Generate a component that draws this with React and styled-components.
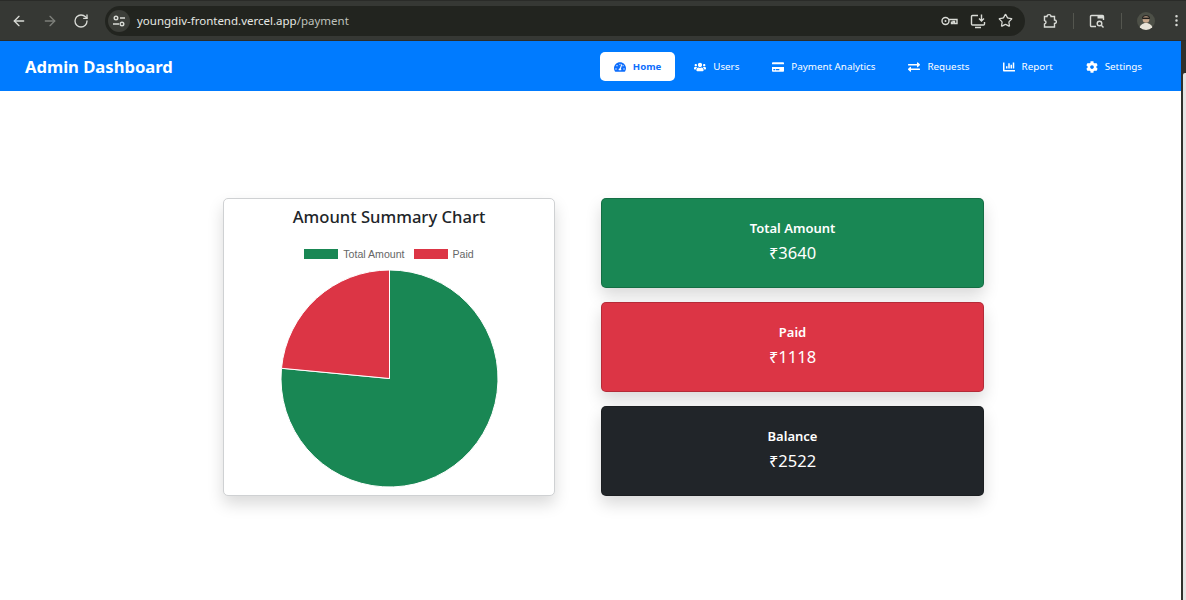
import React from 'react';
import styled, { createGlobalStyle } from 'styled-components';
import { FaTachometerAlt, FaUsers, FaCreditCard, FaExchangeAlt, FaChartBar, FaCog } from 'react-icons/fa';
import { ArrowLeft, ArrowRight, RotateCw, Star, EllipsisVertical } from 'lucide-react';

const GlobalStyle = createGlobalStyle`
html, body {
  margin: 0;
  padding: 0;
  background: #fff;
}
*, *:before, *:after {
  box-sizing: border-box;
}
body {
  font-family: "Noto Sans", "Open Sans", sans-serif;
  overflow: hidden;
}
`;

const Page = styled.div`
  width: 1186px;
  height: 600px;
  display: flex;
  flex-direction: column;
  overflow: hidden;
`;

const BrowserBar = styled.div`
  height: 41px;
  flex: none;
  display: flex;
  align-items: center;
  padding: 0 4px 0 11px;
  background: #363834;
  border-top: 1px solid #2a2b28;
  border-bottom: 1px solid #2c2d2a;
  color: #d9dbd6;
`;

const NavIcons = styled.div`
  display: flex;
  align-items: center;
  gap: 15px;
  margin-right: 16px;
`;

const AddressBar = styled.div`
  width: 920px;
  height: 30px;
  flex: none;
  display: flex;
  align-items: center;
  padding: 0 12px 0 3px;
  background: #22241f;
  border-radius: 15px;
`;

const SiteChip = styled.span`
  width: 22px;
  height: 22px;
  display: flex;
  align-items: center;
  justify-content: center;
  border-radius: 50%;
  background: #3c3e39;
  margin-right: 7px;
`;

const Url = styled.span`
  flex: 1;
  font-size: 11.5px;
  color: #e6e8e3;
  white-space: nowrap;
`;

const UrlPath = styled.span`
  color: #bfc1bc;
`;

const AddressActions = styled.div`
  display: flex;
  align-items: center;
  gap: 12px;
`;

const ToolIcons = styled.div`
  display: flex;
  align-items: center;
  margin-left: 16px;
`;

const Divider = styled.span`
  width: 1px;
  height: 16px;
  background: #54564f;
  margin: 0 15.5px;
`;

const Avatar = styled.span`
  width: 18px;
  height: 18px;
  display: block;
  border-radius: 50%;
  overflow: hidden;
  margin-right: 14px;
`;

const Body = styled.div`
  flex: 1;
  display: flex;
  min-height: 0;
`;

const Main = styled.div`
  flex: 1;
  display: flex;
  flex-direction: column;
`;

const EdgeStrip = styled.div`
  width: 5px;
  flex: none;
  padding: 32px 0 0 2px;
  background: #2f312d;
`;

const EdgeThumb = styled.div`
  height: 100%;
  background: #e4e4e4;
  border-top-left-radius: 2px;
`;

const TopNav = styled.nav`
  height: 50px;
  flex: none;
  display: flex;
  align-items: center;
  justify-content: space-between;
  padding: 0 25px;
  background: #007bff;
  color: #fff;
`;

const Brand = styled.div`
  font-size: 16.6px;
  font-weight: 700;
`;

const Menu = styled.div`
  display: flex;
  align-items: center;
  gap: 5px;
`;

const MenuItem = styled.a`
  height: 29px;
  display: flex;
  align-items: center;
  gap: 7px;
  padding: 1px 14px 0;
  border-radius: 5px;
  font-size: ${p => (p.$active ? 9.6 : 9.8)}px;
  font-weight: ${p => (p.$active ? 700 : 400)};
  color: ${p => (p.$active ? '#0d6efd' : '#fff')};
  background: ${p => (p.$active ? '#fff' : 'transparent')};
  white-space: nowrap;
`;

const Content = styled.main`
  flex: 1;
  display: grid;
  grid-template-columns: 332px 383px;
  column-gap: 46px;
  align-content: start;
  padding: 107px 0 0 223px;
`;

const ChartCard = styled.section`
  height: 298px;
  display: flex;
  flex-direction: column;
  align-items: center;
  padding-top: 7px;
  background: #fff;
  border: 1px solid #cfd1d3;
  border-radius: 5px;
  box-shadow: 0 8px 16px rgba(0, 0, 0, 0.15);
`;

const ChartTitle = styled.h2`
  margin: 0;
  font-size: 16.6px;
  line-height: 22px;
  font-weight: 500;
  color: #212529;
`;

const Legend = styled.div`
  display: flex;
  align-items: center;
  gap: 9px;
  margin-top: 19px;
  font-family: "Liberation Sans", Arial, sans-serif;
  font-size: 10.6px;
  line-height: 14px;
  color: #666;
`;

const LegendItem = styled.span`
  display: flex;
  align-items: center;
  gap: 5px;
`;

const Swatch = styled.span`
  width: 34px;
  height: 10px;
  background: ${p => p.$color};
`;

const PieBox = styled.svg`
  display: block;
  margin-top: 8px;
`;

const Stats = styled.div`
  display: flex;
  flex-direction: column;
  gap: 14px;
`;

const StatCard = styled.div`
  height: 90px;
  display: flex;
  flex-direction: column;
  align-items: center;
  justify-content: center;
  padding-bottom: 3px;
  background: ${p => p.$color};
  border: 1px solid rgba(0, 0, 0, 0.18);
  border-radius: 5px;
  color: #fff;
  box-shadow: 0 8px 16px rgba(0, 0, 0, 0.15);
`;

const StatLabel = styled.div`
  font-size: 13px;
  line-height: 18px;
  font-weight: 600;
`;

const StatValue = styled.div`
  margin-top: 4px;
  font-size: 16.5px;
  line-height: 23px;
`;

const total = 3640;
const paid = 1118;
const GREEN = '#198754';
const RED = '#dc3545';

function Pie({ size, r }) {
  const c = size / 2;
  const share = paid / (total + paid);
  const angle = 2 * Math.PI * (1 - share);
  const x = c + r * Math.sin(angle);
  const y = c - r * Math.cos(angle);
  return (
    <PieBox width={size} height={size} viewBox={`0 0 ${size} ${size}`}>
      <path d={`M${c} ${c}L${c} ${c - r}A${r} ${r} 0 1 1 ${x} ${y}Z`} fill={GREEN} stroke="#fff" />
      <path d={`M${c} ${c}L${x} ${y}A${r} ${r} 0 0 1 ${c} ${c - r}Z`} fill={RED} stroke="#fff" />
    </PieBox>
  );
}

// chrome toolbar glyphs that the icon packs don't have
const ChromeIcon = ({ w = 16, h = 16, children }) => (
  <svg width={w} height={h} viewBox={`0 0 ${w} ${h}`} fill="none" stroke="currentColor" strokeWidth="1.4">
    {children}
  </svg>
);

const SiteIcon = () => (
  <ChromeIcon w={14} h={14}>
    <circle cx="4" cy="4" r="1.800" />
    <path d="M8 4h5M1 10h6" />
    <circle cx="10" cy="10" r="1.800" />
  </ChromeIcon>
);

const PasswordIcon = () => (
  <ChromeIcon w={17} h={12}>
    <circle cx="4.500" cy="6" r="3.500" />
    <circle cx="4.500" cy="6" r="1" fill="currentColor" stroke="none" />
    <path d="M8 4.500h8v4h-2.500v-2h-1.500v2h-1.500v-2" />
  </ChromeIcon>
);

const InstallIcon = () => (
  <ChromeIcon>
    <path d="M8 2.500H2.500a1 1 0 0 0-1 1V11a1 1 0 0 0 1 1h11a1 1 0 0 0 1-1V9M5 14.500h6" />
    <path d="M11.500 1.500v6M9 5.500l2.500 2.500L14 5.500" />
  </ChromeIcon>
);

const ExtensionIcon = () => (
  <ChromeIcon>
    <path d="M6 3.500c0-2.500 4-2.500 4 0h3.500v3.500c2.500 0 2.500 3.500 0 3.500V14H3.500v-3c2-.5 2-3 0-3.500v-4z" />
  </ChromeIcon>
);

const TabSearchIcon = () => (
  <ChromeIcon>
    <path d="M7 13.500H2.500a1 1 0 0 1-1-1V3.500a1 1 0 0 1 1-1h11a1 1 0 0 1 1 1V7" />
    <path d="M8.500 3h6v2.500h-6z" fill="currentColor" stroke="none" />
    <circle cx="10.500" cy="10.500" r="2.300" />
    <path d="M12.300 12.300l2.200 2.200" />
  </ChromeIcon>
);

const items = [
  { label: 'Home', Icon: FaTachometerAlt, active: true },
  { label: 'Users', Icon: FaUsers },
  { label: 'Payment Analytics', Icon: FaCreditCard },
  { label: 'Requests', Icon: FaExchangeAlt },
  { label: 'Report', Icon: FaChartBar },
  { label: 'Settings', Icon: FaCog },
];

export default function App() {
  return (
    <Page>
      <GlobalStyle />
      <BrowserBar>
        <NavIcons>
          <ArrowLeft size={16} />
          <ArrowRight size={16} color="#7d7f7a" />
          <RotateCw size={16} />
        </NavIcons>
        <AddressBar>
          <SiteChip><SiteIcon /></SiteChip>
          <Url>youngdiv-frontend.vercel.app<UrlPath>/payment</UrlPath></Url>
          <AddressActions>
            <PasswordIcon />
            <InstallIcon />
            <Star size={15} />
          </AddressActions>
        </AddressBar>
        <ToolIcons>
          <ExtensionIcon />
          <Divider />
          <TabSearchIcon />
          <Divider />
          <Avatar>
            <svg width="18" height="18" viewBox="0 0 18 18">
              <rect width="18" height="18" fill="#4d5047" />
              <path d="M5 6c0-4 8-4 8 0v1H5z" fill="#2a2724" />
              <circle cx="9" cy="7.500" r="3.300" fill="#c9a88c" />
              <rect x="5.500" y="5.500" width="7" height="1.600" fill="#1f1d1b" />
              <path d="M2 18c.5-5 3.500-7 7-7s6.500 2 7 7z" fill="#e8e3d8" />
            </svg>
          </Avatar>
          <EllipsisVertical size={15} />
        </ToolIcons>
      </BrowserBar>
      <Body>
        <Main>
          <TopNav>
            <Brand>Admin Dashboard</Brand>
            <Menu>
              {items.map(({ label, Icon, active }) => (
                <MenuItem key={label} $active={active}>
                  <Icon size={12} />
                  {label}
                </MenuItem>
              ))}
            </Menu>
          </TopNav>
          <Content>
            <ChartCard>
              <ChartTitle>Amount Summary Chart</ChartTitle>
              <Legend>
                <LegendItem><Swatch $color={GREEN} />Total Amount</LegendItem>
                <LegendItem><Swatch $color={RED} />Paid</LegendItem>
              </Legend>
              <Pie size={219} r={108.500} />
            </ChartCard>
            <Stats>
              <StatCard $color={GREEN}>
                <StatLabel>Total Amount</StatLabel>
                <StatValue>₹{total}</StatValue>
              </StatCard>
              <StatCard $color={RED}>
                <StatLabel>Paid</StatLabel>
                <StatValue>₹{paid}</StatValue>
              </StatCard>
              <StatCard $color="#212529">
                <StatLabel>Balance</StatLabel>
                <StatValue>₹{total - paid}</StatValue>
              </StatCard>
            </Stats>
          </Content>
        </Main>
        <EdgeStrip><EdgeThumb /></EdgeStrip>
      </Body>
    </Page>
  );
}
